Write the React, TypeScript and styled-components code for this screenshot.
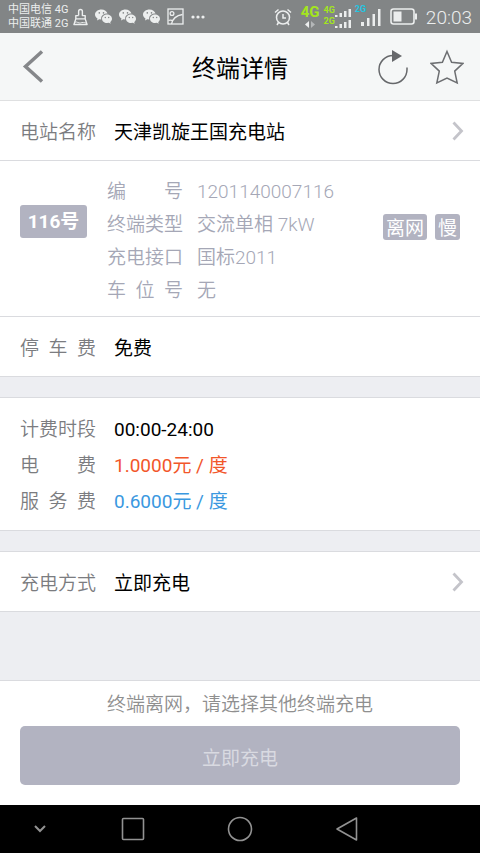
import React from 'react';
import styled, { createGlobalStyle } from 'styled-components';

const GlobalStyle = createGlobalStyle`
  * { box-sizing: border-box; }
  body {
    margin: 0;
    background: #edeef2;
    color: #000;
    font-family: Roboto, "Noto Sans CJK SC", sans-serif;
    font-size: 19px;
  }
  button { font: inherit; color: inherit; border: 0; padding: 0; background: none; }
  svg { display: block; flex: none; }
  dl, dd, dt, p, h1 { margin: 0; font-weight: inherit; }
`;

const Page = styled.div`
  display: flex;
  flex-direction: column;
  min-height: 100vh;
`;

const StatusBar = styled.div`
  display: flex;
  align-items: center;
  justify-content: space-between;
  height: 33px;
  padding: 0 8px;
  background: #828586;
  color: #eceeee;
`;

const StatusGroup = styled.div<{ $gap: number }>`
  display: flex;
  align-items: center;
  gap: ${(p) => p.$gap}px;
`;

const Carriers = styled.div`
  display: flex;
  flex-direction: column;
  width: 58px;
  font-size: 11px;
  line-height: 14px;
  white-space: nowrap;
`;

const NetworkText = styled.div<{ $color: string; $size: number }>`
  font-size: ${(p) => p.$size}px;
  line-height: 1;
  font-weight: 700;
  color: ${(p) => p.$color};
`;

const Stack = styled.div`
  display: flex;
  flex-direction: column;
  align-items: center;
  gap: 1px;
`;

const SignalRow = styled.div`
  display: flex;
  align-items: flex-start;
  height: 11px;

  svg { align-self: flex-end; }
`;

const SingleSignal = styled.div`
  position: relative;
  display: flex;
  align-items: flex-end;
  height: 24px;
  padding: 0 0 3px 6px;
`;

const SignalTag = styled.div`
  position: absolute;
  top: 0;
  left: 0;
`;

const Clock = styled.time`
  font-size: 19px;
  font-weight: 300;
  line-height: 33px;
  padding-top: 2px;
`;

const Header = styled.header`
  display: grid;
  grid-template-columns: 1fr auto 1fr;
  align-items: center;
  height: 68px;
  padding: 0 16px;
  background: #f5f7f7;
  border-bottom: 1px solid #dfe0e1;
`;

const BackButton = styled.button`
  justify-self: start;
  padding: 0 4px;
`;

const Title = styled.h1`
  font-size: 24px;
  line-height: 36px;
  padding-top: 4px;
`;

const HeaderActions = styled.div`
  display: flex;
  justify-content: flex-end;
  gap: 21px;
`;

const Section = styled.section<{ $top?: boolean }>`
  background: #fff;
  border-bottom: 1px solid #dadbdf;
  border-top: ${(p) => (p.$top ? '1px solid #dadbdf' : '0')};
`;

const Row = styled.div`
  display: flex;
  align-items: center;
  width: 100%;
  height: 59px;
  padding: 0 16px 0 20px;
  text-align: left;
`;

const Label = styled.dt<{ $muted?: boolean }>`
  flex: none;
  width: 76px;
  text-align: justify;
  text-align-last: justify;
  white-space: nowrap;
  font-size: 19px;
  font-weight: 350;
  color: ${(p) => (p.$muted ? '#a5a7b6' : '#7b7c80')};
`;

const Value = styled.dd<{ $color?: string; $gap?: number; $light?: boolean }>`
  flex: 1;
  margin-left: ${(p) => p.$gap ?? 18}px;
  font-weight: ${(p) => (p.$light ? 350 : 400)};
  color: ${(p) => p.$color ?? '#000'};
  white-space: nowrap;
`;

const RowButton = styled(Row).attrs({ as: 'button' })`
  cursor: pointer;
`;

const Terminal = styled.div`
  display: flex;
  align-items: flex-start;
  height: 155px;
  padding: 14px 20px 0;
`;

const NumberBadge = styled.div`
  flex: none;
  margin: 30px 20px 0 0;
  width: 67px;
  height: 33px;
  line-height: 34px;
  border-radius: 3px;
  background: #b2b3c1;
  color: #fff;
  font-weight: 700;
  text-align: center;
`;

const Lines = styled.dl<{ $line: number }>`
  flex: 1;
  line-height: ${(p) => p.$line}px;
`;

const Line = styled.div`
  display: flex;
`;

const Tags = styled.div`
  display: flex;
  gap: 8px;
  margin-top: 39px;
`;

const Tag = styled.span`
  height: 26px;
  padding: 0 3px;
  line-height: 30px;
  border-radius: 3px;
  background: #b2b3c1;
  color: #fff;
`;

const Billing = styled.div`
  padding: 14px 20px 10px;
`;

const Gap = styled.div<{ $grow?: boolean }>`
  flex: ${(p) => (p.$grow ? '1 0 20px' : '0 0 20px')};
`;

const Footer = styled.footer`
  display: flex;
  flex-direction: column;
  height: 125px;
  padding: 10px 20px 0;
  background: #fff;
  border-top: 1px solid #dadbdf;
`;

const Notice = styled.p`
  line-height: 28px;
  margin-bottom: 7px;
  text-align: center;
  font-weight: 350;
  color: #8f8f8f;
`;

const ChargeButton = styled.button`
  height: 59px;
  padding-top: 2px;
  border-radius: 5px;
  background: #b2b3c1;
  color: #d9dae1;
`;

const NavBar = styled.nav`
  display: grid;
  grid-template-columns: 80px repeat(3, 1fr) 80px;
  align-items: center;
  height: 48px;
  background: #000;
`;

const NavButton = styled.button`
  display: flex;
  justify-content: center;
  color: #929292;
`;

const CleanerIcon = () => (
  <svg width="15" height="18" viewBox="0 0 16 18" fill="none" stroke="currentColor" strokeWidth="1.500" strokeLinejoin="round">
    <path d="M6 7.500V3a2 2 0 0 1 4 0v4.500h3V11H3V7.500h3M3 11l-2 6h14l-2-6" />
    <path d="M2 14.500c2-1 4 1.500 6 .8s4-.6 6 .2" strokeWidth="1" />
  </svg>
);

const ChatIcon = () => (
  <svg width="17" height="15" viewBox="0 0 17 15">
    <path fill="currentColor" d="M6.500 0.500C3 0.500 0 2.700 0 5.600c0 1.700 1 3 2.500 4L2 11.500l2.300-1.200 2 .300C5.500 7 8.500 4.500 12.500 4.600 11.900 2.200 9.500 .5 6.500 .5z" />
    <path fill="currentColor" d="M17 9.700c0-2.500-2.300-4.300-5-4.300s-5 1.900-5 4.300S9.200 14 12 14l1.900-.3 1.800 1-.5-1.700c1.100-.8 1.800-2 1.800-3.300z" />
    <g fill="#828586">
      <circle cx="4.300" cy="3.900" r=".8" />
      <circle cx="8.500" cy="3.900" r=".8" />
      <circle cx="10.300" cy="8.500" r=".7" />
      <circle cx="13.700" cy="8.500" r=".7" />
    </g>
  </svg>
);

const PictureIcon = () => (
  <svg width="17" height="17" viewBox="0 0 17 17" fill="none" stroke="currentColor" strokeWidth="1.300">
    <rect x="1" y="1" width="15" height="15" />
    <circle cx="5" cy="5.500" r="1.900" />
    <path d="M4.500 16C5.500 11 9 7.500 15.500 6.500M1.500 12.500c2-.8 3.500-.3 4.500.8" />
  </svg>
);

const MoreIcon = () => (
  <svg width="14" height="4" viewBox="0 0 14 4" fill="currentColor">
    <circle cx="2" cy="2" r="1.600" />
    <circle cx="7" cy="2" r="1.600" />
    <circle cx="12" cy="2" r="1.600" />
  </svg>
);

const AlarmIcon = () => (
  <svg width="18" height="18" viewBox="0 0 18 18" fill="none" stroke="currentColor" strokeWidth="1.500">
    <circle cx="9" cy="9.500" r="6.500" />
    <path d="M9 6v4h3M1 4.500l3.500-3M17 4.500l-3.500-3M4.500 14.500L3 17M13.500 14.500L15 17" />
  </svg>
);

const TransferIcon = () => (
  <svg width="10" height="7" viewBox="0 0 10 7">
    <path d="M4 0v7L0 3.500z" fill="#eceeee" />
    <path d="M6 0v7l4-3.500z" fill="#b4b7b8" />
  </svg>
);

const SmallBars = () => (
  <svg width="16" height="8" viewBox="0 0 16 8" fill="currentColor">
    <path d="M0 6h2.500v2H0zM4.500 4H7v4H4.500zM9 2h2.500v6H9zM13.500 0H16v8h-2.500z" />
  </svg>
);

const LargeBars = () => (
  <svg width="20" height="17" viewBox="0 0 20 17" fill="currentColor">
    <path d="M0 13h3v4H0zM6 9h2.500v8H6zM11.500 5H14v12h-2.500zM17 0h2.500v17H17z" />
  </svg>
);

const BatteryIcon = () => (
  <svg width="27" height="17" viewBox="0 0 27 17">
    <rect x="1" y="1" width="23" height="15" rx="2.500" fill="none" stroke="currentColor" strokeWidth="1.600" />
    <path d="M3.500 3.500h8v10h-8zM25 5.500h2v6h-2z" fill="currentColor" />
  </svg>
);

const BackIcon = () => (
  <svg width="24" height="34" viewBox="0 0 24 34" fill="none" stroke="#85878a" strokeWidth="3.500">
    <path d="M22 1.500L5.500 16.500 22 31.500" />
  </svg>
);

const RefreshIcon = () => (
  <svg width="32" height="36" viewBox="0 0 32 36" fill="none" stroke="#66686b" strokeWidth="1.500">
    <path d="M16 6.500A14 14 0 1 0 30 20.500V18.500" />
    <path d="M15 1v12l10-6z" fill="#66686b" stroke="none" />
  </svg>
);

const StarIcon = () => (
  <svg width="34" height="36" viewBox="0 0 34 36" fill="none" stroke="#6d6f72" strokeWidth="1.500">
    <path d="M17 2.500l4.600 10.700L33 14.400l-8.300 7.700 2.500 11.900L17 29 6.800 34l2.500-11.900L1 14.400l11.400-1.200z" />
  </svg>
);

const ChevronIcon = () => (
  <svg width="12" height="20" viewBox="0 0 12 20" fill="none" stroke="#c4c4ca" strokeWidth="2.800">
    <path d="M1.500 1.500L9.500 10l-8 8.500" />
  </svg>
);

const terminalInfo = [
  ['编号', '1201140007116'],
  ['终端类型', '交流单相 7kW'],
  ['充电接口', '国标2011'],
  ['车位号', '无'],
];

const billing = [
  { label: '计费时段', value: '00:00-24:00', color: '#000' },
  { label: '电费', value: '1.0000元 / 度', color: '#f2562a' },
  { label: '服务费', value: '0.6000元 / 度', color: '#3a98e0' },
];

export default function App() {
  return (
    <Page>
      <GlobalStyle />
      <StatusBar>
        <StatusGroup $gap={7}>
          <Carriers>
            <span>中国电信 4G</span>
            <span>中国联通 2G</span>
          </Carriers>
          <CleanerIcon />
          <ChatIcon />
          <ChatIcon />
          <ChatIcon />
          <PictureIcon />
          <MoreIcon />
        </StatusGroup>
        <StatusGroup $gap={9}>
          <AlarmIcon />
          <StatusGroup $gap={4}>
            <Stack>
              <NetworkText $color="#a4e61c" $size={15}>4G</NetworkText>
              <TransferIcon />
            </Stack>
            <div>
              <SignalRow>
                <NetworkText $color="#a4e61c" $size={9}>4G</NetworkText>
                <SmallBars />
              </SignalRow>
              <SignalRow>
                <NetworkText $color="#a4e61c" $size={9}>2G</NetworkText>
                <SmallBars />
              </SignalRow>
            </div>
            <SingleSignal>
              <SignalTag>
                <NetworkText $color="#25c4e0" $size={9}>2G</NetworkText>
              </SignalTag>
              <LargeBars />
            </SingleSignal>
          </StatusGroup>
          <BatteryIcon />
          <Clock>20:03</Clock>
        </StatusGroup>
      </StatusBar>

      <Header>
        <BackButton aria-label="返回"><BackIcon /></BackButton>
        <Title>终端详情</Title>
        <HeaderActions>
          <button aria-label="刷新"><RefreshIcon /></button>
          <button aria-label="收藏"><StarIcon /></button>
        </HeaderActions>
      </Header>

      <Section>
        <RowButton>
          <Label as="span">电站名称</Label>
          <Value as="span">天津凯旋王国充电站</Value>
          <ChevronIcon />
        </RowButton>
      </Section>

      <Section>
        <Terminal>
          <NumberBadge>116号</NumberBadge>
          <Lines $line={33}>
            {terminalInfo.map(([label, value]) => (
              <Line key={label}>
                <Label $muted>{label}</Label>
                <Value $color="#a5a7b6" $gap={14} $light>{value}</Value>
              </Line>
            ))}
          </Lines>
          <Tags>
            <Tag>离网</Tag>
            <Tag>慢</Tag>
          </Tags>
        </Terminal>
      </Section>

      <Section>
        <Row as="dl">
          <Label>停车费</Label>
          <Value>免费</Value>
        </Row>
      </Section>

      <Gap />

      <Section $top>
        <Billing>
          <Lines $line={36}>
            {billing.map((item) => (
              <Line key={item.label}>
                <Label>{item.label}</Label>
                <Value $color={item.color}>{item.value}</Value>
              </Line>
            ))}
          </Lines>
        </Billing>
      </Section>

      <Gap />

      <Section $top>
        <RowButton>
          <Label as="span">充电方式</Label>
          <Value as="span">立即充电</Value>
          <ChevronIcon />
        </RowButton>
      </Section>

      <Gap $grow />

      <Footer>
        <Notice>终端离网，请选择其他终端充电</Notice>
        <ChargeButton disabled>立即充电</ChargeButton>
      </Footer>

      <NavBar>
        <NavButton aria-label="收起">
          <svg width="14" height="10" viewBox="0 0 14 10" fill="none" stroke="currentColor" strokeWidth="2">
            <path d="M2 2l5 5 5-5" />
          </svg>
        </NavButton>
        <NavButton aria-label="最近任务">
          <svg width="24" height="24" viewBox="0 0 24 24" fill="none" stroke="currentColor" strokeWidth="1.600">
            <rect x="1.500" y="1.500" width="21" height="21" rx="1" />
          </svg>
        </NavButton>
        <NavButton aria-label="主屏幕">
          <svg width="26" height="26" viewBox="0 0 26 26" fill="none" stroke="currentColor" strokeWidth="1.600">
            <circle cx="13" cy="13" r="11.500" />
          </svg>
        </NavButton>
        <NavButton aria-label="后退">
          <svg width="24" height="26" viewBox="0 0 24 26" fill="none" stroke="currentColor" strokeWidth="1.600" strokeLinejoin="round">
            <path d="M21.500 2v22L2 13z" />
          </svg>
        </NavButton>
      </NavBar>
    </Page>
  );
}
